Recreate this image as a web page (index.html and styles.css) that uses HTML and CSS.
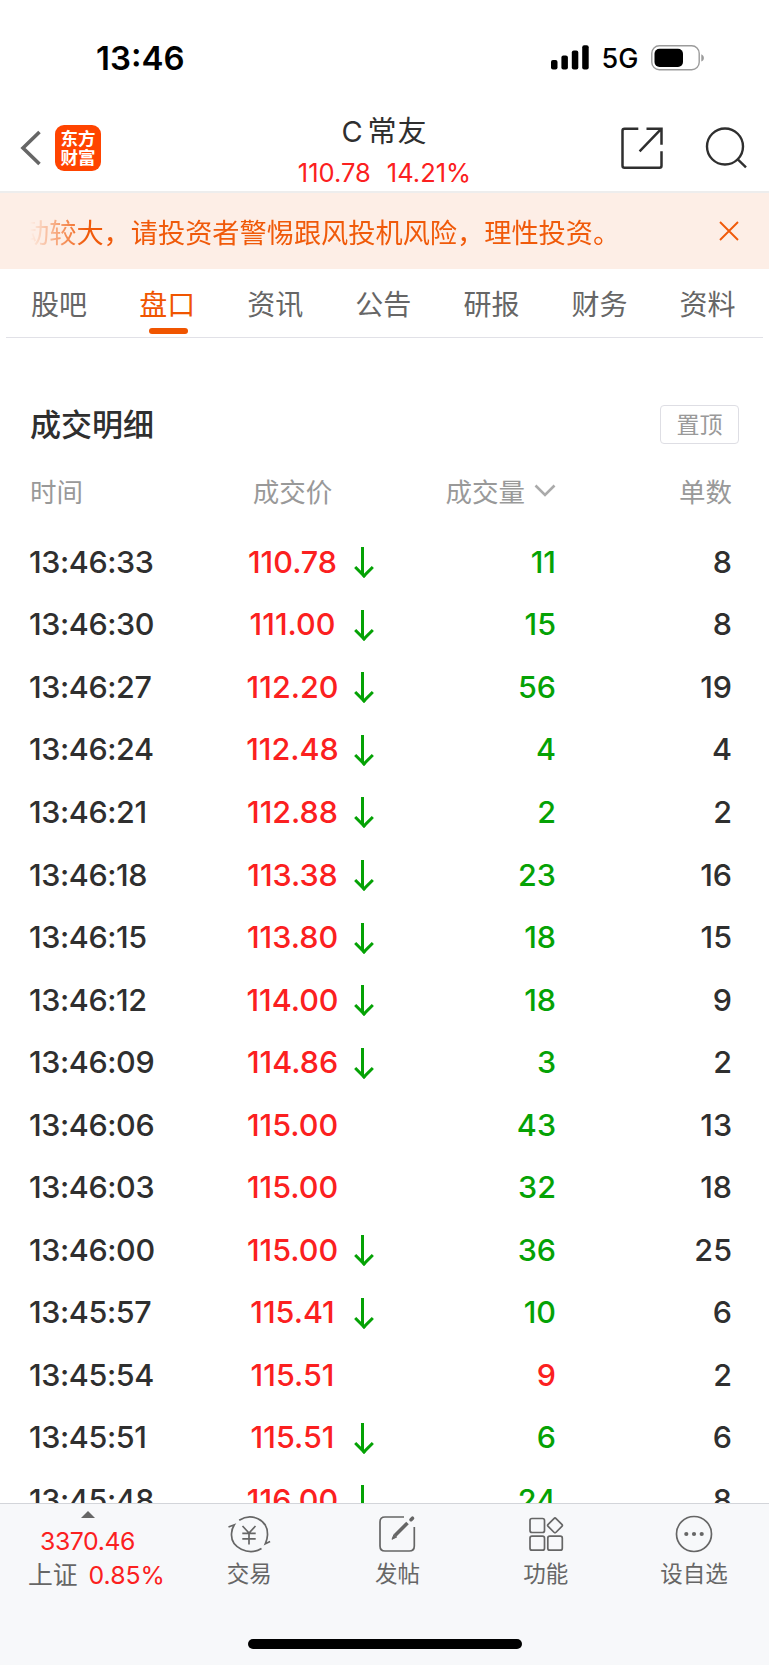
FILE: index.html
```
<!DOCTYPE html>
<html lang="zh-CN">
<head>
    <meta charset="UTF-8">
    <meta name="viewport" content="width=device-width, initial-scale=1.0">
    <title>C常友 - 盘口</title>
    <link rel="stylesheet" href="styles.css">
</head>
<body>
    <div class="app">
        <!-- Status bar -->
        <div class="status-bar">
            <span class="clock">13:46</span>
            <div class="status-icons">
                <svg width="38" height="25" viewBox="0 0 38 25">
                    <rect x="0" y="15" width="6.5" height="9.5" rx="2"/>
                    <rect x="10.4" y="10.5" width="6.5" height="14" rx="2"/>
                    <rect x="20.8" y="5.5" width="6.5" height="19" rx="2"/>
                    <rect x="31.2" y="0.3" width="6.5" height="24.2" rx="2"/>
                </svg>
                <span class="network">5G</span>
                <svg width="54" height="26" viewBox="0 0 54 26">
                    <rect x="0.8" y="0.8" width="47.4" height="24" rx="7.5" fill="none" stroke="#9b9b9b" stroke-width="1.4"/>
                    <rect x="3.5" y="3.7" width="28.5" height="18.2" rx="5"/>
                    <path d="M50.3 9.2v7.4c1.6-.7 2.6-2 2.6-3.7s-1-3-2.6-3.7z" fill="#9b9b9b"/>
                </svg>
            </div>
        </div>

        <!-- Header -->
        <header class="header">
            <div class="header-left">
                <svg class="back" width="22" height="36" viewBox="0 0 22 36" fill="none" stroke="#666" stroke-width="3.6">
                    <path d="M19.5 2L3 18l16.5 16"/>
                </svg>
                <div class="logo"><span>东方</span><span>财富</span></div>
            </div>
            <div class="stock">
                <h1>C<span>常友</span></h1>
                <p><span>110.78</span><span>14.21%</span></p>
            </div>
            <div class="header-right">
                <svg width="42" height="42" viewBox="0 0 42 42" fill="none" stroke="#2f2f2f" stroke-width="2.5">
                    <path d="M17.3 1.7H3.5q-2 0-2 2v35q0 2 2 2h35q2 0 2-2V24.3"/>
                    <path d="M25.5 1.7h15v16M40 2.2L18.6 24.3"/>
                </svg>
                <svg width="42" height="42" viewBox="0 0 42 42" fill="none" stroke="#2f2f2f" stroke-width="2.4">
                    <circle cx="20" cy="19.5" r="18"/>
                    <path d="M32 31.7l9 8.7"/>
                </svg>
            </div>
        </header>

        <!-- Notice -->
        <div class="notice">
            <div class="notice-text"><span>动较大，请投资者警惕跟风投机风险，理性投资。</span></div>
            <svg width="20" height="20" viewBox="0 0 20 20" fill="none" stroke="#f05a0a" stroke-width="1.9">
                <path d="M1 1l18 18M19 1L1 19"/>
            </svg>
        </div>

        <!-- Tabs -->
        <nav class="tabs">
            <span>股吧</span>
            <span class="active">盘口</span>
            <span>资讯</span>
            <span>公告</span>
            <span>研报</span>
            <span>财务</span>
            <span>资料</span>
        </nav>

        <!-- Trade details -->
        <main class="trades">
            <div class="trades-title">
                <h2>成交明细</h2>
                <button type="button">置顶</button>
            </div>
            <div class="row head">
                <span>时间</span>
                <span class="price">成交价</span>
                <span></span>
                <span class="volume">成交量<svg width="22" height="14" viewBox="0 0 22 14" fill="none" stroke="#aaa" stroke-width="2.6"><path d="M1.5 2.5L11 12l9.500-9.500"/></svg></span>
                <span class="count">单数</span>
            </div>
            <div class="row"><span class="time">13:46:33</span><span class="price">110.78</span><i class="down"></i><span class="volume">11</span><span class="count">8</span></div>
            <div class="row"><span class="time">13:46:30</span><span class="price">111.00</span><i class="down"></i><span class="volume">15</span><span class="count">8</span></div>
            <div class="row"><span class="time">13:46:27</span><span class="price">112.20</span><i class="down"></i><span class="volume">56</span><span class="count">19</span></div>
            <div class="row"><span class="time">13:46:24</span><span class="price">112.48</span><i class="down"></i><span class="volume">4</span><span class="count">4</span></div>
            <div class="row"><span class="time">13:46:21</span><span class="price">112.88</span><i class="down"></i><span class="volume">2</span><span class="count">2</span></div>
            <div class="row"><span class="time">13:46:18</span><span class="price">113.38</span><i class="down"></i><span class="volume">23</span><span class="count">16</span></div>
            <div class="row"><span class="time">13:46:15</span><span class="price">113.80</span><i class="down"></i><span class="volume">18</span><span class="count">15</span></div>
            <div class="row"><span class="time">13:46:12</span><span class="price">114.00</span><i class="down"></i><span class="volume">18</span><span class="count">9</span></div>
            <div class="row"><span class="time">13:46:09</span><span class="price">114.86</span><i class="down"></i><span class="volume">3</span><span class="count">2</span></div>
            <div class="row"><span class="time">13:46:06</span><span class="price">115.00</span><i></i><span class="volume">43</span><span class="count">13</span></div>
            <div class="row"><span class="time">13:46:03</span><span class="price">115.00</span><i></i><span class="volume">32</span><span class="count">18</span></div>
            <div class="row"><span class="time">13:46:00</span><span class="price">115.00</span><i class="down"></i><span class="volume">36</span><span class="count">25</span></div>
            <div class="row"><span class="time">13:45:57</span><span class="price">115.41</span><i class="down"></i><span class="volume">10</span><span class="count">6</span></div>
            <div class="row"><span class="time">13:45:54</span><span class="price">115.51</span><i></i><span class="volume buy">9</span><span class="count">2</span></div>
            <div class="row"><span class="time">13:45:51</span><span class="price">115.51</span><i class="down"></i><span class="volume">6</span><span class="count">6</span></div>
            <div class="row"><span class="time">13:45:48</span><span class="price">116.00</span><i class="down"></i><span class="volume">24</span><span class="count">8</span></div>
        </main>

        <!-- Bottom bar -->
        <footer class="bottom">
            <div class="toolbar">
                <div class="index">
                    <svg width="14" height="7" viewBox="0 0 14 7" fill="#666"><path d="M7 0l7 7H0z"/></svg>
                    <p class="index-value">3370.46</p>
                    <p><span>上证</span> 0.85%</p>
                </div>
                <div class="tool">
                    <svg width="44" height="40" viewBox="0 0 44 40" fill="none" stroke="#666" stroke-width="1.7">
                        <path d="M12.2 6.2C24-1.5 41 5 40.500 21q-.1 4-2.200 8.800l4.800-2.200M34.500 34.500C22 42 3 34 4.600 19q.2-4 2.700-8.200L1.500 13"/>
                        <path d="M15.500 12l6.500 7 6.500-7M22 19v11.500M15.300 19.300h13.400M15.300 24.900h13.400"/>
                    </svg>
                    <span>交易</span>
                </div>
                <div class="tool">
                    <svg width="40" height="40" viewBox="0 0 40 40" fill="none" stroke="#666" stroke-width="1.7">
                        <path d="M27 3H8Q3 3 3 8v24Q3 37 8 37h24.300q5 0 5-5V13"/>
                        <path d="M18 21.500L30.500 9" stroke-width="3.6"/>
                        <path d="M15 25.300l1.900-4.800 2.700 2.600z" fill="#666" stroke-width="1"/>
                        <path d="M34 5.700l1.500-1.500" stroke-width="3.6" stroke-linecap="round"/>
                    </svg>
                    <span>发帖</span>
                </div>
                <div class="tool">
                    <svg width="40" height="40" viewBox="0 0 40 40" fill="none" stroke="#666" stroke-width="1.7">
                        <rect x="4" y="4.5" width="14.5" height="14" rx="2"/>
                        <rect x="4" y="22.2" width="14.5" height="14" rx="2"/>
                        <rect x="21.8" y="22.2" width="14.5" height="14" rx="2"/>
                        <rect x="23.4" y="5.8" width="11.2" height="11.2" rx="1.5" transform="rotate(45 29 11.4)"/>
                    </svg>
                    <span>功能</span>
                </div>
                <div class="tool">
                    <svg width="40" height="40" viewBox="0 0 40 40" fill="none" stroke="#666" stroke-width="1.7">
                        <circle cx="20" cy="20" r="17.5"/>
                        <g fill="#666" stroke="none"><circle cx="12.3" cy="20" r="2.1"/><circle cx="20" cy="20" r="2.1"/><circle cx="27.7" cy="20" r="2.1"/></g>
                    </svg>
                    <span>设自选</span>
                </div>
            </div>
            <div class="home-bar"></div>
        </footer>
    </div>
</body>
</html>
```
FILE: styles.css
```
* {
    box-sizing: border-box;
}

body {
    margin: 0;
    background: #fff;
    color: #2f2f2f;
    font-family: Inter, "Noto Sans CJK SC", sans-serif;
}

h1, h2, p {
    margin: 0;
    font-weight: 400;
}

svg {
    display: block;
    flex: none;
}

.app {
    display: flex;
    flex-direction: column;
    width: 769px;
    height: 1665px;
    overflow: hidden;
}

/* Status bar */
.status-bar {
    display: flex;
    justify-content: space-between;
    align-items: center;
    height: 115px;
    padding: 0 64px 0 96px;
    color: #000;
}

.clock {
    padding-top: 1px;
    font-size: 33px;
    font-weight: 600;
    line-height: 1;
}

.status-icons {
    display: flex;
    align-items: center;
}

.network {
    width: 62px;
    font-size: 27px;
    font-weight: 500;
    text-align: center;
    line-height: 1;
    padding-top: 2px;
}

/* Header */
.header {
    display: grid;
    grid-template-columns: 1fr 200px 1fr;
    height: 78px;
    border-bottom: 2px solid #ededed;
}

.header-left,
.header-right {
    display: flex;
    align-items: center;
    height: 65px;
}

.header-left {
    padding-left: 20px;
}

.header-right {
    justify-content: flex-end;
    gap: 42px;
    padding-right: 22px;
}

.logo {
    display: flex;
    flex-direction: column;
    align-items: center;
    justify-content: center;
    width: 46px;
    height: 46px;
    margin-left: 13px;
    background: #ff4400;
    border-radius: 9px;
    color: #fff;
    font-size: 17.5px;
    font-weight: 700;
    line-height: 19px;
}

.stock {
    text-align: center;
}

.stock h1 {
    font-size: 29px;
    line-height: 34px;
}

.stock h1 span {
    margin-left: 5px;
    letter-spacing: 1px;
}

.stock p {
    display: flex;
    justify-content: center;
    gap: 16px;
    color: #fb2020;
    font-size: 25.5px;
    line-height: 47px;
}

/* Notice */
.notice {
    display: flex;
    align-items: center;
    justify-content: space-between;
    height: 76px;
    padding: 0 30px;
    background: #fdeee6;
}

.notice-text {
    display: flex;
    width: 640px;
    padding-top: 5px;
    overflow: hidden;
    color: #f05a0a;
    font-size: 27.2px;
    line-height: 40px;
    white-space: nowrap;
    -webkit-mask-image: linear-gradient(to right, transparent, #000 56px);
    mask-image: linear-gradient(to right, transparent, #000 56px);
}

.notice-text span {
    margin-left: -8px;
}

/* Tabs */
.tabs {
    display: grid;
    grid-template-columns: repeat(7, 108.1px);
    height: 69px;
    margin: 0 6px;
    border-bottom: 1px solid #e1e1e7;
    color: #666;
    font-size: 28px;
    line-height: 72px;
    text-align: center;
}

.tabs span {
    margin-left: -2px;
}

.tabs .active {
    position: relative;
    color: #f05500;
}

.tabs .active::after {
    content: "";
    position: absolute;
    left: 50%;
    bottom: 3px;
    width: 39px;
    height: 6px;
    margin-left: -18.5px;
    margin-bottom: 4px;
    border-radius: 3px;
    background: #f05500;
}

/* Trade details */
.trades {
    flex: 1;
    min-height: 0;
    overflow: hidden;
    padding: 67px 30px 0;
}

.trades-title {
    display: flex;
    align-items: center;
    justify-content: space-between;
    height: 39px;
}

.trades-title h2 {
    font-size: 31px;
    font-weight: 500;
    line-height: 39px;
}

.trades-title button {
    width: 79px;
    height: 39px;
    padding: 2px 0 0;
    border: 1px solid #dedee4;
    border-radius: 4px;
    background: #fff;
    color: #999;
    font: inherit;
    font-size: 23px;
    line-height: 1;
}

.row {
    display: grid;
    grid-template-columns: 191px 143px 59px 133px 176px;
    align-items: center;
    height: 62.55px;
    font-size: 30.5px;
    font-weight: 450;
}

.row.head {
    height: 86px;
    padding-top: 6px;
    color: #999;
    font-size: 26.5px;
    font-weight: 400;
}

.time {
    margin-left: -1px;
    letter-spacing: -0.4px;
}

.price {
    color: #fb2020;
    text-align: center;
}

.head .price {
    color: #999;
}

.volume {
    display: flex;
    align-items: center;
    justify-content: flex-end;
    color: #05a205;
}

.head .volume {
    gap: 9px;
    color: #999;
}

.volume.buy {
    color: #fb2020;
}

.count {
    text-align: right;
}

.down {
    position: relative;
    width: 3px;
    height: 28px;
    margin-left: -3px;
    background: #05a205;
}

.down::after {
    content: "";
    position: absolute;
    left: -4px;
    bottom: 0;
    width: 11px;
    height: 11px;
    border: solid #05a205;
    border-width: 0 3px 3px 0;
    transform: rotate(45deg);
}

/* Bottom bar */
.bottom {
    height: 162px;
    border-top: 1px solid #d3d5da;
    background: #f7f8fa;
    color: #666;
}

.toolbar {
    display: grid;
    grid-template-columns: 175px 148.3px 148.3px 148.3px 148.3px;
    height: 135px;
}

.index {
    display: flex;
    flex-direction: column;
    align-items: center;
    padding-top: 7px;
    color: #fb2020;
    font-size: 24.8px;
    line-height: 34px;
}

.index p {
    padding-left: 18px;
    white-space: nowrap;
}

.index .index-value {
    padding: 6px 0 0;
    letter-spacing: -0.4px;
}

.index span {
    color: #666;
    margin-right: 4px;
}

.tool {
    display: flex;
    flex-direction: column;
    align-items: center;
    padding-top: 10px;
    font-size: 22.5px;
    line-height: 40px;
}

.home-bar {
    width: 274px;
    height: 10px;
    margin: 0 auto;
    border-radius: 5px;
    background: #000;
}
```
